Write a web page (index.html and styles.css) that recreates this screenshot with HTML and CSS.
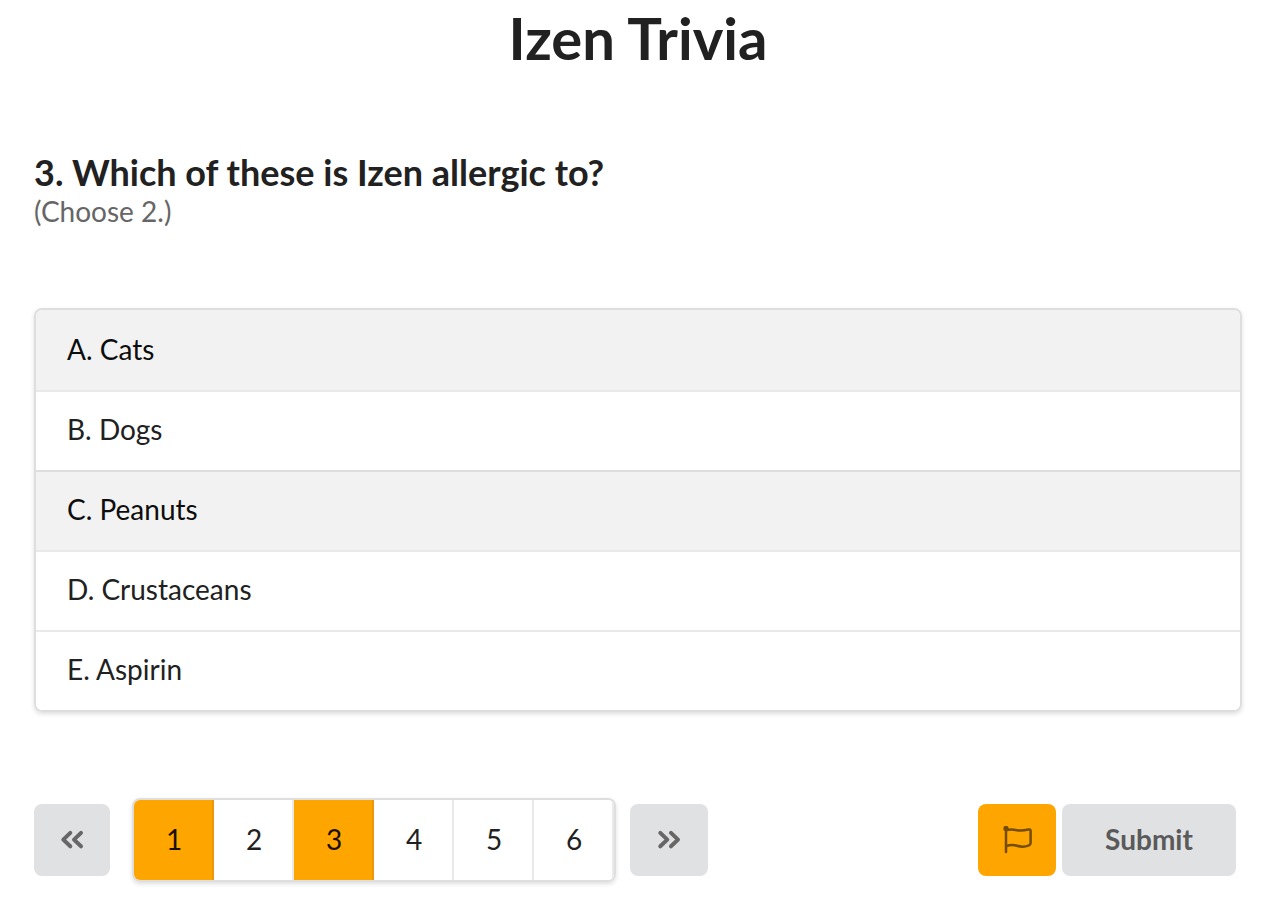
FILE: index.html
```html
<!DOCTYPE html>
<html lang="en">
<head>
<meta charset="utf-8">
<title>Izen Trivia</title>
<link rel="stylesheet" href="styles.css">
</head>
<body>
<main class="quiz">
  <h1 class="title">Izen Trivia</h1>
  <header class="question">
    <h2 class="question-text">3. Which of these is Izen allergic to?</h2>
    <p class="hint">(Choose 2.)</p>
  </header>
  <div class="choices">
    <button type="button" class="choice selected">A. Cats</button>
    <button type="button" class="choice">B. Dogs</button>
    <button type="button" class="choice selected">C. Peanuts</button>
    <button type="button" class="choice">D. Crustaceans</button>
    <button type="button" class="choice">E. Aspirin</button>
  </div>
  <footer class="controls">
    <button type="button" class="btn prev" aria-label="Previous">
      <svg class="chevrons" viewBox="0 0 24 20"><path d="M10.3 2.9 3.3 9.6l7 6.7M21 2.9l-7 6.700 7 6.700"/></svg>
    </button>
    <nav class="pages" aria-label="Questions">
      <button type="button" class="page marked">1</button>
      <button type="button" class="page">2</button>
      <button type="button" class="page marked">3</button>
      <button type="button" class="page">4</button>
      <button type="button" class="page">5</button>
      <button type="button" class="page">6</button>
    </nav>
    <button type="button" class="btn next" aria-label="Next">
      <svg class="chevrons" viewBox="0 0 24 20"><path d="M3.3 2.9l7 6.7-7 6.7M14 2.9l7 6.7-7 6.7"/></svg>
    </button>
    <button type="button" class="btn flag" aria-label="Flag question">
      <svg class="flag-icon" viewBox="0 0 32 28"><path d="M5 2v24M5 4.300C9 2.800 12 3.300 16 4.200S23 4.500 27.500 3.500Q29.600 3 29.600 4.800V17Q29.600 18.700 28 19.300C23 21.400 20 21 16 19.800S9 18.700 5 20.300"/><circle cx="5" cy="2.400" r="1.400"/></svg>
    </button>
    <button type="button" class="btn submit">Submit</button>
  </footer>
</main>
</body>
</html>
```
FILE: styles.css
```css
* { box-sizing: border-box; }
body {
  margin: 0;
  background: #fff;
  color: #212121;
  font-family: Lato, sans-serif;
  font-size: 28px;
  line-height: 40px;
}
button { font: inherit; color: inherit; cursor: pointer; }
.quiz { padding: 2px 30px 26px 34px; }
.title {
  margin: 0;
  font-size: 58px;
  line-height: 72px;
  text-align: center;
}
.question { margin-top: 76px; }
.question-text { margin: 0; font-size: 36px; line-height: 44px; }
.hint { margin: 0; line-height: 34px; color: #666; }
.choices {
  display: flex;
  flex-direction: column;
  margin-top: 80px;
  border: 2px solid #dededf;
  border-radius: 8px;
  overflow: hidden;
  box-shadow: 0 2px 4px rgba(34, 36, 38, 0.15);
}
.choice {
  height: 80px;
  padding: 0 31px 4px;
  border: 0;
  border-top: 2px solid #e8e9e9;
  background: #fff;
  text-align: left;
}
.choice:first-child { border-top: 0; padding-bottom: 2px; }
.choice.selected { background: #f2f2f2; border-color: #dededf; color: #0d0d0d; }
.controls { display: flex; align-items: center; margin-top: 86px; padding-right: 6px; }
.btn {
  display: flex;
  align-items: center;
  justify-content: center;
  height: 72px;
  padding: 0;
  border: 0;
  border-radius: 8px;
  background: #e0e1e2;
  color: #5a5a5a;
  font-weight: 700;
}
.prev { width: 76px; }
.next { width: 78px; margin-left: 14px; }
.chevrons {
  width: 24px;
  height: 20px;
  fill: none;
  stroke: #666;
  stroke-width: 4;
  stroke-linecap: round;
  stroke-linejoin: round;
}
.pages {
  display: flex;
  margin-left: 22px;
  border: 2px solid #dededf;
  border-radius: 8px;
  overflow: hidden;
  box-shadow: 0 2px 4px rgba(34, 36, 38, 0.15);
}
.page {
  width: 80px;
  height: 80px;
  padding: 0 0 2px 2px;
  border: 0;
  border-right: 2px solid #e8e9e9;
  background: #fff;
}
.page.marked { background: #ffa500; border-right-color: #e8980a; color: #191000; }
.flag { width: 78px; margin-left: auto; background: #ffa500; }
.flag-icon {
  width: 32px;
  height: 28px;
  fill: none;
  stroke: #734c05;
  stroke-width: 2.5;
  stroke-linecap: round;
}
.submit { width: 174px; padding-bottom: 2px; margin-left: 6px; }
```
